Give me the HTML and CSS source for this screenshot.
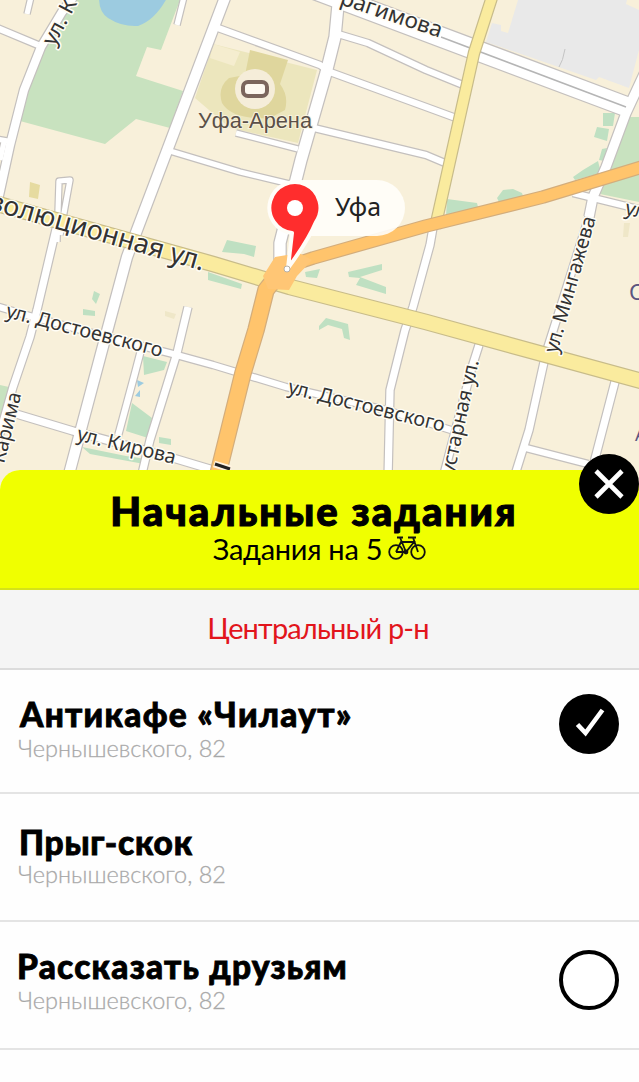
FILE: index.html
```html
<!DOCTYPE html>
<html lang="ru">
<head>
<meta charset="utf-8">
<title>Начальные задания</title>
<link rel="stylesheet" href="styles.css">
</head>
<body>
<main class="screen">
  <svg class="map" width="639" height="492" viewBox="0 0 639 492">
    <!-- parks, water and blocks -->
    <path class="park" d="M77 -5L60 15L42 50L27 85L20 121L105 144L136 119L170 128L183 91L136 76L147 47L161 50L180 0V-5Z"/>
    <path class="water" d="M99 -2Q99 12 108 18Q122 27 138 26Q155 20 167 -2Z"/>
    <path class="zone" d="M518 0L508 33L501 31V25L492 23L486 42L596 80L599 77L629 88L639 50V10L626 4L627 0Z"/>
    <path class="zone-line" d="M565 49Q563 61 559 67"/>
    <path class="park" d="M625 117H639V166L610 172ZM605 181L639 171V202L600 194Z"/>
    <path class="park soft" d="M597 127L609 129L607 141L594 137ZM602 149L607 148L604 161L599 160ZM573 177L583 170L598 161L601 173L575 180ZM603 113h12l-2 13h-10ZM497 198l6-8l10-1l9 4l2 6l-24 5ZM447 199l30 4l1 4l-32 9Z"/>
    <path class="park soft" d="M222 252l5-12l29 6l-2 11l-10-3ZM208 272l34 12l-1 5l-33-9ZM305 272l15-3l-3 9l-11-1ZM348 272l34-8v6l-22 7l26 10v7l-30-9l4-7l-11-1ZM319 326l7-8l22 6l2 16l-6-2l-2-9l-14-4l-9 5ZM94 291l6 3l-4 10l-4-5ZM83 309l12 2v5l-12-1ZM143 356l24 6l-3 8l-20 5ZM132 403l20 15l-4 20l-22-7ZM82 447l44 9l20 3l-2 5l-54-10ZM159 437l12 2v6l-12-2Z"/>
    <path class="park" d="M0 385l9 2l-9 42Z"/>
    <path class="water" d="M137 380l7 3l-6 4ZM135 396l5-6v7Z"/>
    <path class="building" d="M30 182l10 3l-2 14l-9-2Z"/>
    <path class="building faint" d="M624 223h6l-2 14h-5ZM165 311l11 3l-2 5l-9-3Z"/>
    <path class="arena" d="M213 44L317 70L298 143L230 128L195 98L208 60Z"/>
    <path class="arena-dark" d="M250 50L288 60L280 84Q289 96 285 110L270 118Q232 120 222 103Q217 88 229 78L245 75Z"/>
    <path class="pale" d="M213 44L240 52L234 66L210 58Z"/>

    <defs>
      <g id="minor">
        <path class="w9" d="M80 -12L62 12L41 47L24 90L10 145L-2 200"/>
        <path class="w7" d="M-5 27L38 45"/>
        <path class="w6" d="M31 -3L27 14M-4 139L8 141M184 -3L177 25M4 142L0 160M236 133L298 149"/>
        <path class="w11" d="M226 -5L137 230L127 257L102 350L68 478"/>
        <path class="w6" d="M170 151L240 172L290 184M57 242L59 181L70 180L60 235"/>
        <path class="w7" d="M218 28L320 65L330 72L426 107L456 118M338 34L368 43L426 70L463 85M314 128L426 155L445 163M573 193L642 210M526 448L588 464"/>
        <path class="w12" d="M338 5L335 37L326 73L301 160L280 243V262"/>
        <path class="w20" d="M300 -16L630 108"/>
        <path class="w10" d="M645 72L626 113L606 167L593 197L589 217"/>
        <path class="w8" d="M589 217L546 353L529 430L514 478M434 222L430 245L413 307L405 330L390 390L388 478M479 345L472 367L443 478M616 378L590 478"/>
        <path class="w7" d="M-4 306L33 317L103 336L173 354L213 365L286 387L386 410L451 430"/>
        <path class="w8" d="M57 225L37 310L30 337L13 387L-2 440M13 413L73 431L173 458L230 475M188 307L177 353L150 440L141 478"/>
        <path class="w7" d="M141 350L135 373L118 436"/>
      </g>
      <g id="yellow">
        <path class="w11" d="M493 -6L474 53L435 228"/>
        <path class="w15" d="M-6 203L213 264L290 287L426 322L546 355L645 382"/>
      </g>
      <g id="orange">
        <path class="w12" d="M283 268L313 258L426 226L543 197L645 166"/>
        <path class="w16" d="M284 267L266 290L256 330L243 373L217 478"/>
      </g>
    </defs>
    <use href="#minor" class="edge"/>
    <use href="#minor" class="road"/>
    <path class="divider" d="M441 37L626 107"/>
    <use href="#yellow" class="edge warm"/>
    <use href="#yellow" class="road yellow"/>
    <use href="#orange" class="edge hot"/>
    <use href="#orange" class="road orange"/>
    <path class="junction" d="M275 257L299 253L312 260L297 276L289 290L268 289L263 276Z"/>

    <circle cx="255" cy="89" r="20" fill="#f5edd9"/>
    <rect x="243" y="82" width="24" height="14" rx="5" fill="#fdf8ef" stroke="#7b655c" stroke-width="4"/>

    <!-- street names -->
    <g class="street">
      <text transform="translate(-13 209) rotate(16)" font-size="27" textLength="224" lengthAdjust="spacingAndGlyphs">волюционная ул.</text>
      <text transform="translate(5 317) rotate(14.4)" font-size="20" textLength="161" lengthAdjust="spacingAndGlyphs">ул. Достоевского</text>
      <text transform="translate(287 393) rotate(14)" font-size="20" textLength="161" lengthAdjust="spacingAndGlyphs">ул. Достоевского</text>
      <text transform="translate(76 440) rotate(13.8)" font-size="20" textLength="101" lengthAdjust="spacingAndGlyphs">ул. Кирова</text>
      <text transform="translate(4 464) rotate(-76)" font-size="20" textLength="72" lengthAdjust="spacingAndGlyphs">Карима</text>
      <text transform="translate(557 354) rotate(-74)" font-size="20" textLength="141" lengthAdjust="spacingAndGlyphs">ул. Мингажева</text>
      <text transform="translate(451 487) rotate(-77.5)" font-size="20" textLength="129" lengthAdjust="spacingAndGlyphs">Кустарная ул.</text>
      <text transform="translate(339 4) rotate(18.500)" font-size="22" textLength="106" lengthAdjust="spacingAndGlyphs">рагимова</text>
      <text transform="translate(54 47) rotate(-62)" font-size="21" textLength="50" lengthAdjust="spacingAndGlyphs">ул. К</text>
      <text transform="translate(624 214) rotate(14)" font-size="20">ул.</text>
    </g>
    <text class="place" x="629" y="300" font-size="22">С</text>
    <text class="place" x="635" y="441" font-size="18">А</text>
    <path d="M214 464L231 469" stroke="#fff3e0" stroke-width="7"/>
    <path d="M215 464L230 469" stroke="#222" stroke-width="3"/>
    <text class="venue" x="198" y="128" textLength="114" lengthAdjust="spacingAndGlyphs">Уфа-Арена</text>

    <!-- city pin -->
    <rect x="272" y="180" width="133" height="56" rx="28" fill="#fffefa" opacity=".9"/>
    <text class="city" x="335" y="216" textLength="46" lengthAdjust="spacingAndGlyphs">Уфа</text>
    <path d="M288 268L292 233A25.500 25.500 0 1 1 316 222Q308 241 288 268Z" fill="#ff2d2d" stroke="#fffdf8" stroke-width="4" stroke-linejoin="round"/>
    <circle cx="295" cy="208" r="8" fill="#fff"/>
    <circle cx="287" cy="269" r="3" fill="#fff" stroke="#b5b0a8"/>
  </svg>

  <section class="sheet">
    <button class="close" aria-label="Закрыть">
      <svg width="60" height="60" viewBox="0 0 60 60"><path d="M17 17L43 43M43 17L17 43" stroke="#fff" stroke-width="4.600"/></svg>
    </button>
    <header class="head">
      <h1 class="title">Начальные задания</h1>
      <p class="subtitle"><span class="subtitle-text">Задания на 5</span>
        <svg class="bike" width="38" height="24" viewBox="0 0 38 24" fill="none" stroke="#111" stroke-width="1.800">
          <circle cx="8" cy="16" r="6.800"/><circle cx="30" cy="16" r="6.800"/>
          <path d="M8 16L13 6H26L18 16H8M9 1.500H15M12 1.500L18 16M30 16L25 1.500H20M25 1.500H28"/>
          <circle cx="18" cy="16" r="1.500"/>
        </svg>
      </p>
    </header>
    <div class="district"><span class="district-text">Центральный р-н</span></div>
    <ul class="list">
      <li class="item first">
        <div class="info"><h2 class="name">Антикафе «Чилаут»</h2><p class="address">Чернышевского, 82</p></div>
        <svg class="mark" width="60" height="60" viewBox="0 0 60 60"><circle cx="30" cy="30" r="30"/><path d="M18.500 30.500L26.500 39L43.500 16" fill="none" stroke="#fff" stroke-width="4.600"/></svg>
      </li>
      <li class="item second">
        <div class="info"><h2 class="name">Прыг-скок</h2><p class="address">Чернышевского, 82</p></div>
      </li>
      <li class="item third">
        <div class="info"><h2 class="name">Рассказать друзьям</h2><p class="address">Чернышевского, 82</p></div>
        <svg class="mark" width="60" height="60" viewBox="0 0 60 60"><circle cx="30" cy="30" r="28" fill="#fff" stroke="#000" stroke-width="4"/></svg>
      </li>
    </ul>
  </section>
</main>
</body>
</html>
```
FILE: styles.css
```css
* { box-sizing: border-box; margin: 0; padding: 0; }
body { background: #fff; font-family: Lato, "Open Sans", sans-serif; color: #000; }
.screen { width: 639px; height: 1082px; overflow: hidden; background: #fefefe; }

.map { display: block; background: #f8f0da; }
.park { fill: #c8e2bf; }
.park.soft { fill: #bfe0c2; }
.water { fill: #9ccbe0; }
.zone { fill: #e9e9e9; }
.zone-line { fill: none; stroke: #c4c4c4; }
.building { fill: #e6dba0; }
.building.faint { fill: #efe7c8; }
.arena { fill: #ece6bd; }
.arena-dark { fill: #dfd69d; }
.pale { fill: #f5edcf; }

/* each road is drawn twice: a wider casing, then the fill */
.edge, .road { fill: none; stroke-linejoin: round; }
.edge { --casing: 1.6px; stroke: #c4c0be; }
.road { --casing: -0.8px; stroke: #fff; }
.w6 { stroke-width: calc(6px + var(--casing)); }
.w7 { stroke-width: calc(7px + var(--casing)); }
.w8 { stroke-width: calc(8px + var(--casing)); }
.w9 { stroke-width: calc(9px + var(--casing)); }
.w10 { stroke-width: calc(10px + var(--casing)); }
.w11 { stroke-width: calc(11px + var(--casing)); }
.w12 { stroke-width: calc(12px + var(--casing)); }
.w15 { stroke-width: calc(15px + var(--casing)); }
.w16 { stroke-width: calc(16px + var(--casing)); }
.w20 { stroke-width: calc(20px + var(--casing)); }
.edge.warm { stroke: #c8bc8a; }
.edge.hot { stroke: #d3ad7c; }
.yellow { stroke: #faeb9e; }
.orange { stroke: #ffc46c; }
.divider { fill: none; stroke: #b5b5b5; stroke-width: 1.5; }
.junction { fill: #ffc675; }
.street text { font-family: "Noto Sans", sans-serif; fill: #333; stroke: #fffdf5; stroke-width: 3px; stroke-linejoin: round; paint-order: stroke; }
.place { font-family: "Noto Sans", sans-serif; fill: #5b5580; }
.venue { font-family: "Liberation Sans", sans-serif; font-size: 22px; fill: #5b5048; stroke: #f8f2dd; stroke-width: 2px; paint-order: stroke; }
.city { font-family: "Noto Sans", sans-serif; font-size: 25px; fill: #222; }

.sheet { position: relative; margin-top: -22px; background: #fefefe; border-radius: 20px 20px 0 0; }
.close { position: absolute; top: -16px; right: 0; width: 60px; height: 60px; border: 0; border-radius: 50%; background: #000; }
.close svg { display: block; }
.head { display: flex; flex-direction: column; align-items: center; height: 120px; padding-top: 18px; background: #f0ff00; border-bottom: 2px solid #d4e21a; border-radius: 20px 20px 0 0; }
.title { margin-right: 11px; font-size: 40px; font-weight: 900; line-height: 46px; letter-spacing: 2.1px; -webkit-text-stroke: 1.1px #000; white-space: nowrap; }
.subtitle { display: flex; align-items: center; gap: 6px; height: 30px; font-size: 29px; line-height: 30px; letter-spacing: -0.3px; white-space: nowrap; }
.bike { display: block; margin-top: -2px; }
.district { display: flex; justify-content: center; height: 80px; padding-right: 3px; background: #f5f5f5; border-bottom: 2px solid #dcdcdc; font-size: 29px; line-height: 76px; letter-spacing: -0.85px; color: #e2151c; white-space: nowrap; }
.list { list-style: none; }
.item { display: flex; justify-content: space-between; align-items: flex-start; height: 128px; padding: 24px 20px 0 18px; border-bottom: 2px solid #e4e4e4; }
.item.first { height: 124px; }
.info { display: flex; flex-direction: column; height: 67px; justify-content: space-between; }
.name { font-size: 33.5px; font-weight: 900; line-height: 40px; letter-spacing: 1.25px; -webkit-text-stroke: 0.8px #000; white-space: nowrap; }
.first .name { padding-left: 2px; }
.second .name { padding: 6px 0 0 1px; line-height: 36px; letter-spacing: 0.7px; }
.third .name { margin-left: -1px; letter-spacing: 1.2px; }
.third .mark { margin-top: 4px; }
.address { font-size: 23.5px; font-weight: 300; line-height: 28px; color: #a3a3a3; -webkit-text-stroke: 0.3px #b4b4b4; white-space: nowrap; }
```
